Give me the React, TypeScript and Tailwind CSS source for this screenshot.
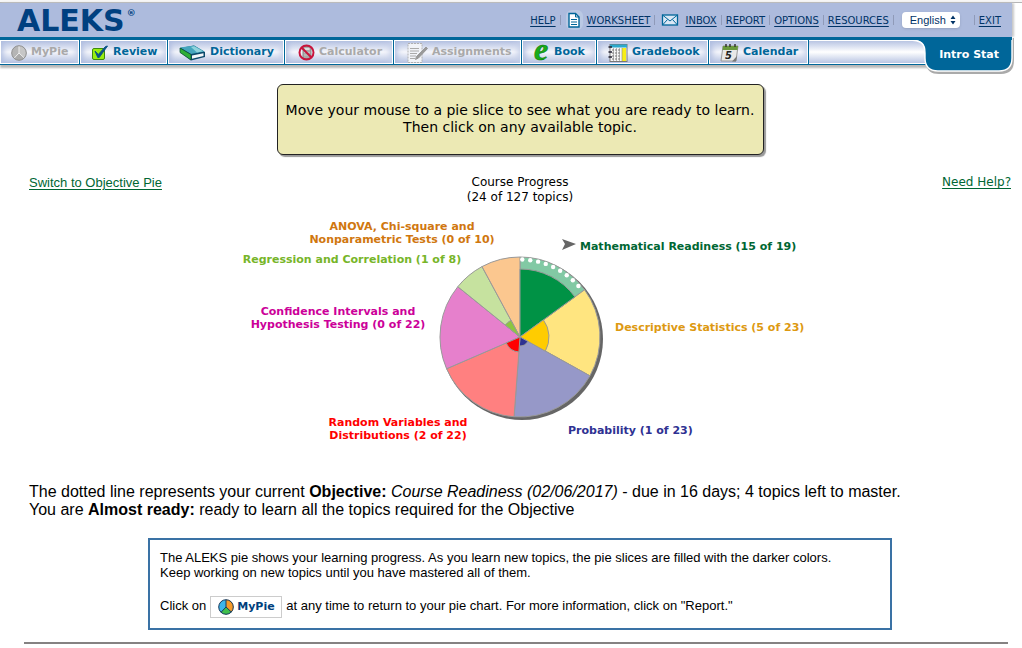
import type { ReactNode } from 'react';

const center = { x: 279, y: 125 };
const radius = 80;

function point(r: number, angle: number) {
  const a = (angle * Math.PI) / 180;
  return `${(center.x + r * Math.sin(a)).toFixed(2)} ${(center.y - r * Math.cos(a)).toFixed(2)}`;
}

function wedge(r: number, from: number, to: number) {
  return `M${center.x} ${center.y} L${point(r, from)} A${r} ${r} 0 0 1 ${point(r, to)} Z`;
}

type Slice = {
  total: number;
  filled: number;
  light: string;
  dark: string;
  text: string;
  lines: string[];
  x: number;
  y: number;
  middle?: boolean;
};

const slices: Slice[] = [
  { total: 19, filled: 68, light: '#82c9a4', dark: '#009245', text: '#006633', lines: ['Mathematical Readiness (15 of 19)'], x: 339, y: 38 },
  { total: 23, filled: 29, light: '#ffe580', dark: '#ffcc00', text: '#dd9911', lines: ['Descriptive Statistics (5 of 23)'], x: 374, y: 119 },
  { total: 23, filled: 9, light: '#9698c8', dark: '#2e3192', text: '#2e3192', lines: ['Probability (1 of 23)'], x: 327, y: 222 },
  { total: 22, filled: 15, light: '#ff8080', dark: '#ff0000', text: '#ff0000', lines: ['Random Variables and', 'Distributions (2 of 22)'], x: 157, y: 214, middle: true },
  { total: 22, filled: 0, light: '#e680cc', dark: '#cc0099', text: '#cc0099', lines: ['Confidence Intervals and', 'Hypothesis Testing (0 of 22)'], x: 97, y: 103, middle: true },
  { total: 8, filled: 19, light: '#c6e29f', dark: '#8cc63f', text: '#77b529', lines: ['Regression and Correlation (1 of 8)'], x: 111, y: 51, middle: true },
  { total: 10, filled: 0, light: '#fbc78f', dark: '#d9770a', text: '#d0770f', lines: ['ANOVA, Chi-square and', 'Nonparametric Tests (0 of 10)'], x: 161, y: 18, middle: true },
];

function PieChart() {
  const sum = slices.reduce((n, s) => n + s.total, 0);
  let at = 0;
  const arcs = slices.map((s) => {
    const from = at;
    at += (s.total / sum) * 360;
    return { ...s, from, to: at };
  });
  const dots = [1.7, 7.6, 13.5, 19.4, 25.3, 31.2, 37.1, 43, 48.9];
  return (
    <svg viewBox="-22 0 602 234" role="img" aria-label="Course progress pie" className="w-[602px] max-w-full">
      <circle cx={center.x + 2} cy={center.y + 2} r={radius + 1} fill="#666" />
      {arcs.map((s) => (
        <path key={s.text + s.total} d={wedge(radius, s.from, s.to)} fill={s.light} stroke="#999" strokeWidth="1" />
      ))}
      {arcs.filter((s) => s.filled > 0).map((s) => (
        <path key={s.text + s.total} d={wedge(s.filled, s.from, s.to)} fill={s.dark} stroke="#999" strokeWidth="1" />
      ))}
      {dots.map((d) => {
        const [x, y] = point(77.5, d).split(' ');
        return <circle key={d} cx={x} cy={y} r="2.2" fill="#fff" />;
      })}
      <path d="M321 27 L335 32 L321 38 L324 32 Z" fill="#666" />
      {slices.map((s) => (
        <text
          key={s.lines[0]}
          fill={s.text}
          textAnchor={s.middle ? 'middle' : 'start'}
          className="text-[11px] font-bold"
        >
          {s.lines.map((line, i) => (
            <tspan key={line} x={s.x} y={s.y + i * 13}>{line}</tspan>
          ))}
        </text>
      ))}
    </svg>
  );
}

function PieIcon({ muted = false }: { muted?: boolean }) {
  return (
    <svg width="16" height="16" viewBox="0 0 16 16" aria-hidden="true">
      <circle cx="8" cy="8" r="7.3" fill={muted ? '#b5b5b5' : '#3db5ea'} />
      <path d="M8 8 V0.7 A7.3 7.3 0 0 1 13.5 13 Z" fill={muted ? '#c6c6c6' : '#f79a28'} />
      <path d="M8 8 L13.5 13 A7.3 7.3 0 0 1 3 13.3 Z" fill={muted ? '#aaaaaa' : '#3fbf4c'} />
      <path d="M8 1 V8 L13.3 13 M8 8 L3 13.3" fill="none" stroke={muted ? '#eee' : '#1b3a5c'} strokeWidth="1" />
      <circle cx="8" cy="8" r="7.3" fill="none" stroke={muted ? '#8f8f8f' : '#1b3a5c'} />
    </svg>
  );
}

const icons: Record<string, ReactNode> = {
  review: (
    <svg width="18" height="16" viewBox="0 0 18 16" aria-hidden="true">
      <rect x="1.5" y="3.5" width="12" height="11" rx="1.5" fill="#99ee11" stroke="#3c8a10" />
      <path d="M4 6 L7.3 9.5 L14.5 1.5 L16.5 1 L8.2 12.5 L6.8 12.5 Z" fill="#0b5486" stroke="#0b5486" />
    </svg>
  ),
  dictionary: (
    <svg width="27" height="16" viewBox="0 0 27 16" aria-hidden="true">
      <path d="M1 3 L15 0.5 L26 7 L26 12 L12 15.5 L1 7 Z" fill="#0b4a6b" />
      <path d="M1 2.5 L15 0.5 L25.5 6.5 L12 9 Z" fill="#45a6bd" />
      <path d="M12 2 L15 1.3 L24 6.3 L18 7.4 Z" fill="#8fd3dc" />
      <path d="M1 3 L12 9.5 V15 L1 7.5 Z" fill="#2fae35" stroke="#0a4a3a" strokeWidth="0.7" />
      <path d="M13 10.5 L24.5 8.2 V11 L13 13.7 Z" fill="#f4f7fa" />
    </svg>
  ),
  calculator: (
    <svg width="17" height="17" viewBox="0 0 17 17" aria-hidden="true">
      <rect x="5" y="2.5" width="8" height="12" rx="1" fill="#aaa" stroke="#888" />
      <rect x="6.5" y="4" width="5" height="2" fill="#ddd" />
      <path d="M6.5 8.5 H12 M6.5 11 H12" stroke="#ddd" strokeDasharray="1 1" />
      <circle cx="8.5" cy="8.5" r="7" fill="none" stroke="#c8143c" strokeWidth="2" />
      <path d="M3.5 3.5 L13.5 13.5" stroke="#c8143c" strokeWidth="2" />
    </svg>
  ),
  assignments: (
    <svg width="21" height="20" viewBox="0 0 21 20" aria-hidden="true">
      <rect x="1" y="0.5" width="14" height="19" fill="#f1f3f8" stroke="#b0b0b0" strokeDasharray="2 1" />
      <path d="M3 5.5 H12 M3 8 H12 M3 10.5 H10 M3 13 H9 M3 15.5 H8" stroke="#aaa" />
      <path d="M19 4 L20.5 5.5 L11.5 15 L8.5 16.5 L9.5 13.5 Z" fill="#999" stroke="#999" />
    </svg>
  ),
  book: (
    <svg width="17" height="20" viewBox="0 0 17 20" aria-hidden="true" className="overflow-visible">
      <text x="1" y="17" className="font-['Liberation_Serif',serif] text-[32px] font-bold italic" fill="#19ad19" stroke="#0b7a0b" strokeWidth="0.6">e</text>
    </svg>
  ),
  gradebook: (
    <svg width="20" height="18" viewBox="0 0 20 18" aria-hidden="true">
      <rect x="2" y="0.5" width="17" height="17" fill="#f5f5f5" stroke="#777" />
      <path d="M2 2 H19" stroke="#2ba9cc" strokeWidth="3" />
      <rect x="14" y="4" width="4" height="13" fill="#f8ee16" />
      <path d="M4 6 H13 M4 9 H13 M4 12 H13 M4 15 H13" stroke="#777" strokeDasharray="2 1" />
      <path d="M5.5 4 V17 M8.5 4 V17 M11.5 4 V17 M14 4 V17" stroke="#888" strokeWidth="0.6" />
      <path d="M0.5 3 H4 M0.5 8 H4 M0.5 13 H4" stroke="#223" strokeWidth="1.5" />
    </svg>
  ),
  calendar: (
    <svg width="19" height="19" viewBox="0 0 19 19" aria-hidden="true">
      <path d="M3 3 H18 L16 18 H1 Z" fill="#e8e8e8" stroke="#999" />
      <path d="M12 18.5 L17 13 L16 18.5 Z" fill="#777" />
      <path d="M3 3 H18 L17.5 7 H2.5 Z" fill="#6a9a3c" />
      <path d="M6 1 V4 M10 1 V4 M15 1 V4" stroke="#333" strokeWidth="1.5" />
      <text x="5" y="16" className="text-[10px] font-bold italic" fill="#222">5</text>
    </svg>
  ),
};

const tabs = [
  { label: 'MyPie', icon: <PieIcon muted />, width: 'w-20', pad: 'pl-2.5', muted: true },
  { label: 'Review', icon: icons.review, width: 'w-22', pad: 'pl-2.5' },
  { label: 'Dictionary', icon: icons.dictionary, width: 'w-[117px]', pad: 'pl-2.5' },
  { label: 'Calculator', icon: icons.calculator, width: 'w-[109px]', pad: 'pl-3', muted: true },
  { label: 'Assignments', icon: icons.assignments, width: 'w-32', pad: 'pl-3', muted: true },
  { label: 'Book', icon: icons.book, width: 'w-[75px]', pad: 'pl-2.5' },
  { label: 'Gradebook', icon: icons.gradebook, width: 'w-28', pad: 'pl-2.5' },
  { label: 'Calendar', icon: icons.calendar, width: 'w-[100px]', pad: 'pl-2.5' },
];

function TopLink({ children, icon }: { children: string; icon?: ReactNode }) {
  return (
    <a href="#" className="flex items-center gap-1 text-[#003366] underline underline-offset-2">
      {icon}
      {children}
    </a>
  );
}

function Divider() {
  return <span className="h-2.5 w-px bg-[#8f9ab8]" />;
}

export default function App() {
  return (
    <div className="bg-white font-['DejaVu_Sans',Verdana,sans-serif] text-black">
      <div className="h-[3px] border-b border-[#b5b5b5] bg-[#f6f6f6]" />
      <header className="relative mr-2.5">
        <div className="flex h-[34px] items-center justify-between bg-[#adbbdd] pr-[11px] pl-[17px] shadow-[2px_0_2px_#c8c8c8]">
          <div className="flex items-start pt-0.5 text-[30px] leading-8 font-bold text-[#004080]">
            ALEKS
            <span className="pt-1 pl-0.5 text-[9px] leading-none">®</span>
          </div>
          <nav className="flex items-center gap-1 text-[10px]">
            <TopLink>HELP</TopLink>
            <Divider />
            <TopLink
              icon={
                <svg width="18" height="20" viewBox="0 0 18 20" aria-hidden="true">
                  <rect x="1" y="0" width="17" height="20" rx="6" fill="#bac9e4" />
                  <path d="M4 3.5 H10.5 L14 7 V17 H4 Z" fill="#fff" stroke="#006699" strokeWidth="1.4" />
                  <path d="M10.5 3.5 V7 H14 M6 9.5 H12 M6 12 H12 M6 14.5 H12" fill="none" stroke="#006699" />
                </svg>
              }
            >
              WORKSHEET
            </TopLink>
            <Divider />
            <TopLink
              icon={
                <svg width="22" height="12" viewBox="0 0 22 12" aria-hidden="true">
                  <rect x="3.5" y="1" width="15" height="10" fill="#dbe8f5" stroke="#006699" strokeWidth="1.3" />
                  <path d="M3.5 1 L11 7 L18.5 1 M3.5 11 L8.5 5.5 M18.5 11 L13.5 5.5" fill="none" stroke="#006699" />
                </svg>
              }
            >
              INBOX
            </TopLink>
            <Divider />
            <TopLink>REPORT</TopLink>
            <Divider />
            <TopLink>OPTIONS</TopLink>
            <Divider />
            <TopLink>RESOURCES</TopLink>
            <Divider />
            <span className="relative mr-2.5 ml-1 flex items-center">
              <select
                aria-label="Language"
                className="h-4 w-[58px] appearance-none rounded-sm bg-white pl-2 font-['Liberation_Sans',Arial,sans-serif] text-[11px] leading-4 text-[#003366] shadow-sm"
              >
                <option>English</option>
              </select>
              <svg className="pointer-events-none absolute right-1" width="6" height="10" viewBox="0 0 6 10" aria-hidden="true">
                <path d="M3 0.5 L5.5 4 H0.5 Z M3 9.5 L5.5 6 H0.5 Z" fill="#003366" />
              </svg>
            </span>
            <Divider />
            <TopLink>EXIT</TopLink>
          </nav>
        </div>
        <div className="h-7 border-t-[3px] border-b border-[#006699] shadow-[0_3px_2px_#b8b8b8]">
          <ul className="flex h-full">
            {tabs.map((t) => (
              <li key={t.label} className={`${t.width} shrink-0 border-r border-[#006699] bg-white p-px`}>
                <button
                  type="button"
                  className={`${t.pad} flex h-full w-full items-center gap-1 bg-linear-to-b from-[#b4c1e1] via-[#f5f6fb] to-[#b4c1e1] pt-px text-[11px] font-bold shadow-[inset_7px_0_6px_-5px_#aebcdf,inset_-7px_0_6px_-5px_#c5cfe8] ${t.muted ? 'text-[#a9a9a9]' : 'text-[#006699]'}`}
                >
                  {t.icon}
                  {t.label}
                </button>
              </li>
            ))}
            <li className="flex-1 bg-white py-px">
              <div className="h-full bg-linear-to-b from-[#b9c5e3] via-white to-[#b9c5e3]" />
            </li>
          </ul>
        </div>
        <svg className="absolute top-[33px] -right-1" width="108" height="42" viewBox="0 0 108 42" aria-hidden="true">
          <path d="M18 29 C20 35 23 38 31 38 H93 C102 38 106 33 106 24 V2 H90 V20 H18 Z" fill="#aaa" />
          <path d="M0 3 C14 3 17 8 17 17 V22 C17 31 21 35 30 35 H91 C100 35 104 31 104 22 V3 Z" fill="#006699" />
          <path d="M0 4 C14 4 17 8 17 17 V22 C17 31 21 35 30 35 H91 C100 35 104 31 104 22 V1" fill="none" stroke="#fff" strokeWidth="1.4" />
          <path d="M0 1 H104 V4 H0 Z" fill="#006699" />
        </svg>
        <a href="#" className="absolute top-[46px] right-[13px] text-[11px] leading-3 font-bold text-white">Intro Stat</a>
      </header>

      <main className="flex flex-col pt-[19px] pr-[11px] pl-[29px]">
        <p className="h-[71px] w-[487px] self-center rounded-md border border-[#222] bg-[#ece9b4] pt-[17px] text-center text-sm leading-[17px] shadow-[2px_2px_1px_#999]">
          Move your mouse to a pie slice to see what you are ready to learn.
          <br />
          Then click on any available topic.
        </p>

        <div className="mt-5 grid grid-cols-3 items-start leading-[15px]">
          <a href="#" className="justify-self-start font-['Liberation_Sans',Arial,sans-serif] text-[13px] leading-[15px] text-[#006633] underline underline-offset-2">Switch to Objective Pie</a>
          <h1 className="text-center text-xs leading-[15px]">
            Course Progress
            <br />
            (24 of 127 topics)
          </h1>
          <a href="#" className="justify-self-end text-xs leading-[15px] text-[#006633] underline underline-offset-2">Need Help?</a>
        </div>

        <div className="mt-[7px] self-center">
          <PieChart />
        </div>

        <p className="mt-[37px] font-['Liberation_Sans',Arial,sans-serif] text-base leading-[18px]">
          The dotted line represents your current <b>Objective:</b> <i>Course Readiness (02/06/2017)</i> - due in 16 days; 4 topics left to master.
          <br />
          You are <b>Almost ready:</b> ready to learn all the topics required for the Objective
        </p>

        <section className="mt-[19px] w-[744px] max-w-full self-center border-2 border-[#3a72a5] p-2.5 font-['Liberation_Sans',Arial,sans-serif] text-[13px] leading-[15px]">
          <p>
            The ALEKS pie shows your learning progress. As you learn new topics, the pie slices are filled with the darker colors.
            <br />
            Keep working on new topics until you have mastered all of them.
          </p>
          <div className="mt-4 flex items-start gap-1 leading-5">
            Click on
            <button type="button" className="flex h-[22px] w-18 items-center gap-[3px] border border-[#ccc] pl-[7px] font-['DejaVu_Sans',Verdana,sans-serif] text-[11px] font-bold text-[#003f7d]">
              <PieIcon />
              MyPie
            </button>
            at any time to return to your pie chart. For more information, click on "Report."
          </div>
        </section>
        <hr className="mt-3 mr-[3px] -ml-[5px] border-t-2 border-[#858282]" />
      </main>
    </div>
  );
}
